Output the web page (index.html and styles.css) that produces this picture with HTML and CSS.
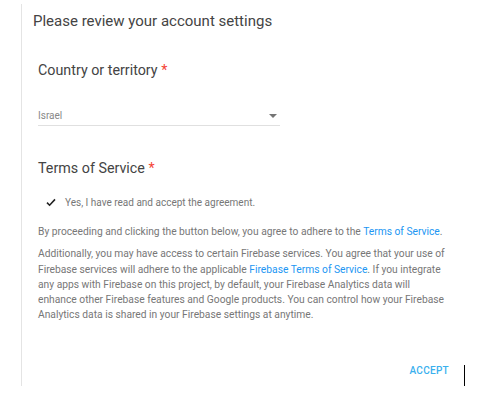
FILE: index.html
```html
<!DOCTYPE html>
<html lang="en">
<head>
  <meta charset="UTF-8" />
  <title>Account settings</title>
  <link rel="stylesheet" href="styles.css">
</head>
<body>
  <div class="dialog">
    <h2 class="title">Please review your account settings</h2>

    <div class="section">
      <div class="label">Country or territory <span class="req">*</span></div>
      <div class="select">
        <span>Israel</span>
        <span class="arrow"></span>
      </div>
    </div>

    <div class="section terms">
      <div class="label">Terms of Service <span class="req">*</span></div>
      <div class="check">
        <svg width="10" height="9" viewBox="0 0 10 9"><path d="M1 4.6 L3.6 7.2 L9 1.4" fill="none" stroke="#222" stroke-width="1.6"/></svg>
        <span>Yes, I have read and accept the agreement.</span>
      </div>
      <p class="note">By proceeding and clicking the button below, you agree to adhere to the <a href="#">Terms of Service</a>.</p>
      <p class="note">Additionally, you may have access to certain Firebase services. You agree that your use of Firebase services will adhere to the applicable <a href="#">Firebase Terms of Service</a>. If you integrate any apps with Firebase on this project, by default, your Firebase Analytics data will enhance other Firebase features and Google products. You can control how your Firebase Analytics data is shared in your Firebase settings at anytime.</p>
    </div>

    <div class="actions">
      <button class="accept">ACCEPT</button>
      <span class="caret"></span>
    </div>
  </div>
</body>
</html>
```

FILE: styles.css
```css
body {
  margin: 0;
  font-family: Roboto, "Liberation Sans", sans-serif;
  background: #fff;
  color: #777;
}
.dialog {
  margin: 4px 0 0 21px;
  border-left: 1px solid #e4e4e4;
  padding: 8px 0 0 11px;
  width: 444px;
  height: 382px;
  box-sizing: border-box;
}
.title {
  margin: 0;
  font-size: 15px;
  font-weight: 400;
  color: #444;
  line-height: 18px;
}
.section {
  padding-left: 5px;
  width: 242px;
}
.label {
  margin-top: 31px;
  font-size: 14.3px;
  color: #444;
  line-height: 18px;
}
.req {
  color: #f44336;
}
.select {
  margin-top: 31px;
  display: flex;
  justify-content: space-between;
  align-items: center;
  font-size: 10px;
  color: #888;
  border-bottom: 1px solid #e0e0e0;
  padding-bottom: 4px;
}
.arrow {
  width: 0;
  height: 0;
  border-left: 4px solid transparent;
  border-right: 4px solid transparent;
  border-top: 4px solid #757575;
  margin-right: 3px;
}
.terms {
  width: 411px;
}
.terms .label {
  margin-top: 33px;
}
.check {
  margin-top: 20px;
  padding-left: 8px;
  display: flex;
  align-items: center;
  gap: 9px;
  font-size: 10px;
}
.note {
  margin: 16px 0 0;
  font-size: 10.25px;
  line-height: 15.3px;
}
.note + .note {
  margin-top: 7px;
}
.note a {
  color: #2196f3;
  text-decoration: none;
}
.actions {
  margin-top: 42px;
  display: flex;
  justify-content: flex-end;
  align-items: flex-start;
}
.accept {
  background: none;
  border: none;
  padding: 0;
  font-family: inherit;
  font-size: 10px;
  font-weight: 500;
  color: #3ab0ee;
  letter-spacing: 0.3px;
  cursor: pointer;
}
.caret {
  width: 1px;
  height: 21px;
  background: #000;
  margin-left: 15px;
  margin-top: 0;
}
```
